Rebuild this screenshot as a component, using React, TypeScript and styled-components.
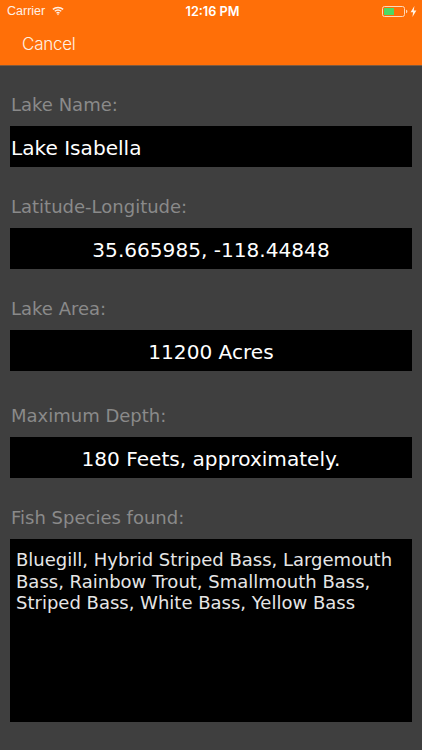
import styled, { createGlobalStyle } from 'styled-components';

const GlobalStyle = createGlobalStyle`
  html, body {
    margin: 0;
    padding: 0;
    background: #3f3f3f;
  }
`;

const Screen = styled.div`
  width: 422px;
  height: 750px;
  overflow: hidden;
  display: flex;
  flex-direction: column;
  background: #3f3f3f;
`;

const Header = styled.header`
  height: 65px;
  background: #ff6f08;
  border-bottom: 1px solid #7d5a3f;
  flex-shrink: 0;
  color: #fff;
  font-family: 'Liberation Sans', Arial, sans-serif;
`;

const StatusBar = styled.div`
  height: 22px;
  display: grid;
  grid-template-columns: 1fr auto 1fr;
  align-items: center;
  padding: 0 4px 0 7px;
  font-size: 12.5px;
`;

const StatusLeft = styled.div`
  display: flex;
  align-items: center;
  gap: 7px;
  opacity: 0.9;
`;

const Clock = styled.div`
  font-weight: 600;
  font-size: 12.7px;
  font-family: 'Inter', 'Liberation Sans', sans-serif;
`;

const StatusRight = styled.div`
  display: flex;
  justify-content: flex-end;
  align-items: center;
  gap: 2px;
  padding-right: 1px;
`;

const NavBar = styled.div`
  height: 43px;
  display: flex;
  align-items: center;
  padding-left: 22px;
  box-sizing: border-box;
`;

const CancelButton = styled.span`
  font-size: 17px;
  color: #fff2e4;
  font-family: 'Inter', 'Liberation Sans', sans-serif;
  font-weight: 300;
  letter-spacing: -0.25px;
`;

const Form = styled.main`
  display: flex;
  flex-direction: column;
  padding: 27px 10px 0;
  font-family: 'DejaVu Sans', Verdana, sans-serif;
`;

const Field = styled.section<{ $gap?: number }>`
  display: flex;
  flex-direction: column;
  margin-bottom: ${(p) => p.$gap ?? 28}px;
`;

const FieldLabel = styled.label`
  height: 23px;
  line-height: 23px;
  margin-bottom: 10px;
  padding-left: 1px;
  font-size: 18px;
  color: #8a8a8a;
`;

const ValueBox = styled.div<{ $center?: boolean }>`
  height: 41px;
  line-height: 44px;
  padding-left: ${(p) => (p.$center ? 0 : 1)}px;
  background: #000;
  color: #fff;
  font-size: 20.1px;
  text-align: ${(p) => (p.$center ? 'center' : 'left')};
`;

const NotesBox = styled.div`
  height: 183px;
  box-sizing: border-box;
  padding: 10px 6px;
  background: #000;
  color: #e6e6e6;
  font-size: 18px;
  line-height: 21.6px;
`;

export default function App() {
  return (
    <Screen>
      <GlobalStyle />
      <Header>
        <StatusBar>
          <StatusLeft>
            <span>Carrier</span>
            <svg width="12" height="10" viewBox="0 0 14 11" fill="none" stroke="#fff" strokeWidth="1.6">
              <path d="M1 3.6C4.4.6 9.6.6 13 3.6" />
              <path d="M3.2 5.9c2.2-1.9 5.4-1.9 7.6 0" />
              <path d="M5.3 8c1-.9 2.4-.9 3.4 0" />
              <circle cx="7" cy="9.6" r="0.8" fill="#fff" stroke="none" />
            </svg>
          </StatusLeft>
          <Clock>12:16 PM</Clock>
          <StatusRight>
            <svg width="26" height="11" viewBox="0 0 26 11" fill="none">
              <rect x="0.5" y="0.5" width="22" height="10" rx="2" stroke="#ffd9b8" />
              <rect x="2" y="2" width="10" height="7" fill="#4cd964" />
              <path d="M24 3.8c1 .2 1.4.8 1.4 1.7s-.4 1.5-1.4 1.7z" fill="#ffd9b8" />
            </svg>
            <svg width="7" height="11" viewBox="0 0 7 11" fill="#fff2e4">
              <path d="M4.4 0 0.6 6.2h2.5L2.4 11l4-6.6H3.8z" />
            </svg>
          </StatusRight>
        </StatusBar>
        <NavBar>
          <CancelButton>Cancel</CancelButton>
        </NavBar>
      </Header>
      <Form>
        <Field>
          <FieldLabel>Lake Name:</FieldLabel>
          <ValueBox>Lake Isabella</ValueBox>
        </Field>
        <Field>
          <FieldLabel>Latitude-Longitude:</FieldLabel>
          <ValueBox $center>35.665985, -118.44848</ValueBox>
        </Field>
        <Field $gap={33}>
          <FieldLabel>Lake Area:</FieldLabel>
          <ValueBox $center>11200 Acres</ValueBox>
        </Field>
        <Field>
          <FieldLabel>Maximum Depth:</FieldLabel>
          <ValueBox $center>180 Feets, approximately.</ValueBox>
        </Field>
        <Field $gap={0}>
          <FieldLabel>Fish Species found:</FieldLabel>
          <NotesBox>
            Bluegill, Hybrid Striped Bass, Largemouth Bass, Rainbow Trout, Smallmouth Bass, Striped Bass, White Bass,
            Yellow Bass
          </NotesBox>
        </Field>
      </Form>
    </Screen>
  );
}
